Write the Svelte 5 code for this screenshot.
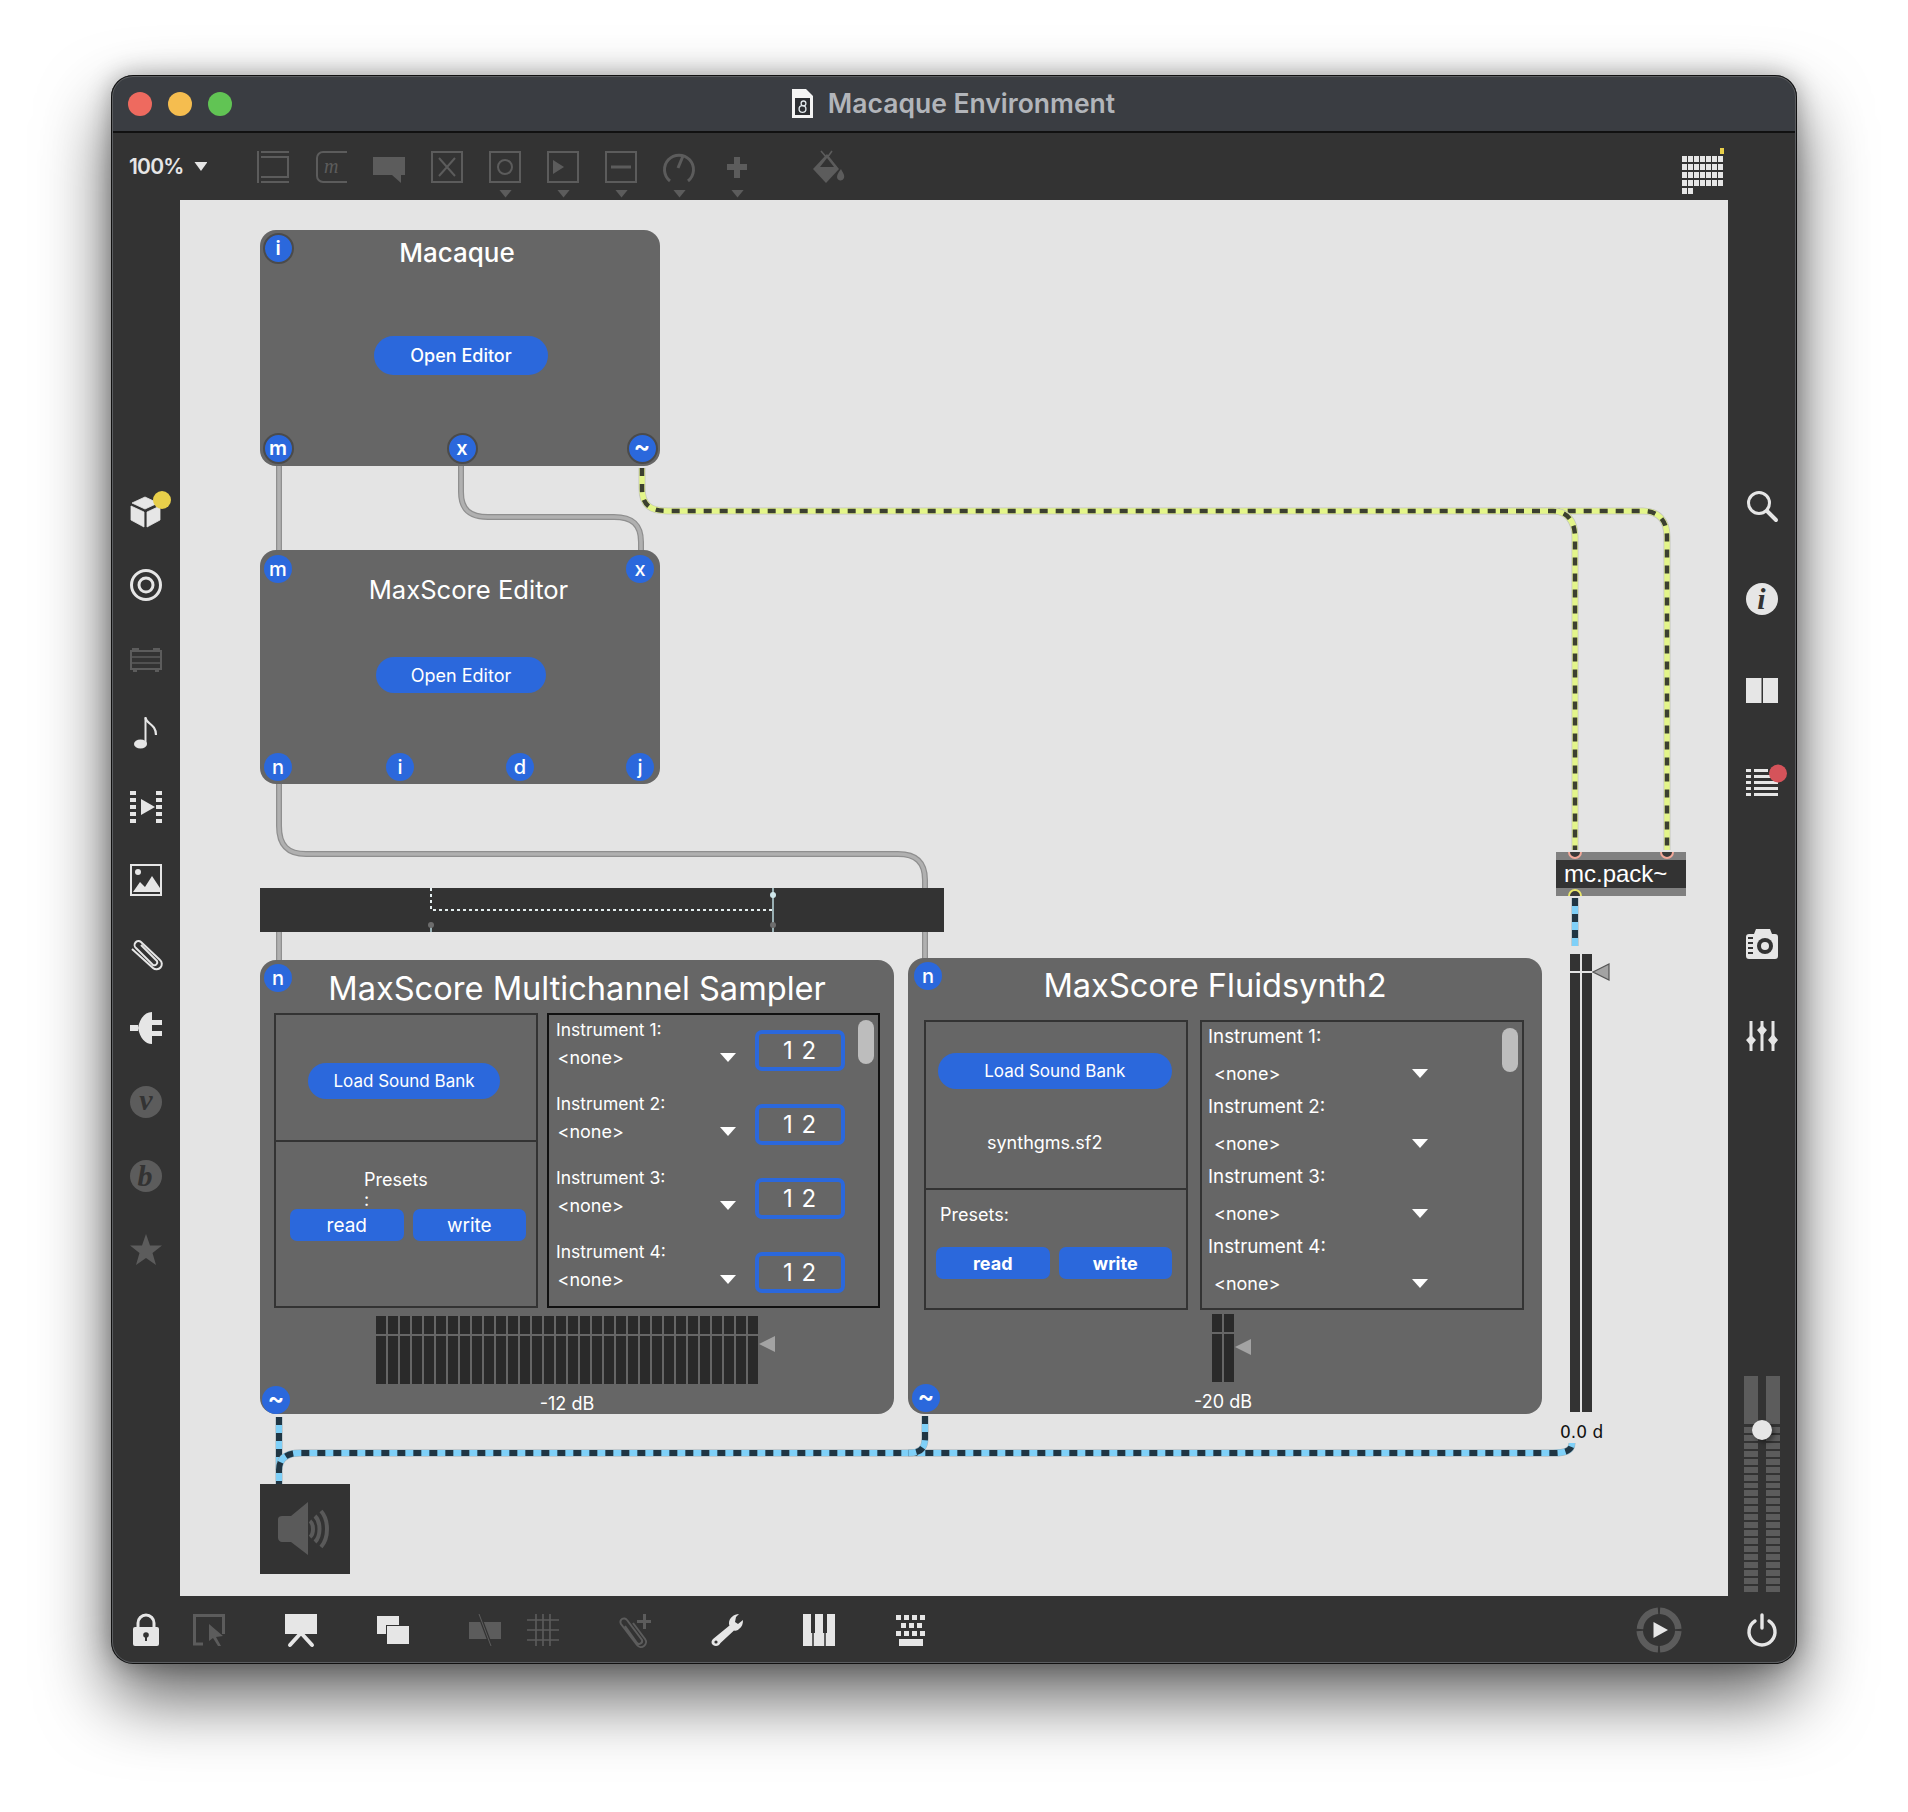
<script>
  const macaquePorts = [
    { t: 'i', x: 18, y: 18, ring: true },
    { t: 'm', x: 18, y: 218, ring: true },
    { t: 'x', x: 202, y: 218, ring: true },
    { t: '~', x: 382, y: 218, ring: true }
  ];
  const editorPorts = [
    { t: 'm', x: 18, y: 19 },
    { t: 'x', x: 380, y: 19 },
    { t: 'n', x: 18, y: 216.5 },
    { t: 'i', x: 140, y: 216.5 },
    { t: 'd', x: 260, y: 216.5 },
    { t: 'j', x: 380, y: 216.5 }
  ];
  const samplerPorts = [
    { t: 'n', x: 18, y: 18 },
    { t: '~', x: 16, y: 440 }
  ];
  const fluidPorts = [
    { t: 'n', x: 20, y: 18 },
    { t: '~', x: 18, y: 440 }
  ];
  const instruments = ['Instrument 1:', 'Instrument 2:', 'Instrument 3:', 'Instrument 4:'];
  const gridRows = [7, 7, 7, 7, 2];
  const cols32 = Array.from({ length: 32 }, (_, i) => i);
  const cols2 = [0, 1];
  const segs = Array.from({ length: 21 }, (_, i) => i);
  const limePaths = [
    'M642 468 V488 C642 505 650 511 668 511 H1643 C1658 511 1667 520 1667 537 V850',
    'M1500 511 H1553 C1566 511 1575 520 1575 537 V850'
  ];
  const bluePaths = [
    'M279 1417 V1484',
    'M279 1470 C279 1458 287 1453 300 1453 H1553 C1565 1453 1572 1451 1572 1443',
    'M925 1416 V1438 C925 1449 920 1453 908 1453',
    'M1575 898 V946'
  ];
  const grayPaths = [
    'M279 466 V550',
    'M461 466 V492 C461 510 470 517 488 517 H614 C632 517 641 524 641 542 V550',
    'M279 784 V826 C279 846 288 854 306 854 H898 C916 854 925 862 925 880 V892',
    'M279 930 V962',
    'M925 930 V960'
  ];
</script>

<div class="page">
  <div class="window">
    <header class="titlebar">
      <div class="lights">
        <span class="light red"></span>
        <span class="light yellow"></span>
        <span class="light green"></span>
      </div>
      <div class="title">
        <svg class="docicon" viewBox="0 0 21 29">
          <path d="M0 0H14L21 7V29H0Z" fill="#f4f4f4" />
          <rect x="3" y="9" width="15" height="17" fill="#2c2e32" />
          <circle cx="10.5" cy="20" r="3.4" fill="none" stroke="#dfe6ea" stroke-width="1.4" />
          <circle cx="11.5" cy="14.4" r="2.4" fill="none" stroke="#dfe6ea" stroke-width="1.3" />
        </svg>
        <span>Macaque Environment</span>
      </div>
    </header>

    <div class="toolbar">
      <div class="zoomctl"><span>100%</span><i class="tri-down"></i></div>
      <div class="tools">
        <svg class="ico dim" viewBox="0 0 32 32"><path d="M1 0V32M4 1H32M4 6H32M4 26H32M4 31H32M31 6V26" fill="none" stroke="currentColor" stroke-width="2" /></svg>
        <svg class="ico dim" viewBox="0 0 32 32"><path d="M32 1H8A6 6 0 0 0 2 7V25A6 6 0 0 0 8 31H32" fill="none" stroke="currentColor" stroke-width="2" /><text x="9" y="22" class="svgm">m</text></svg>
        <svg class="ico dim" viewBox="0 0 32 32"><path d="M0 6H32V24H28V32L19 24H0Z" fill="currentColor" /></svg>
        <svg class="ico dim" viewBox="0 0 32 32"><rect x="1" y="1" width="30" height="30" fill="none" stroke="currentColor" stroke-width="2" /><path d="M8 7L24 25M24 7L8 25" stroke="currentColor" stroke-width="2" /></svg>
        <div class="drop"><svg class="ico dim" viewBox="0 0 32 32"><rect x="1" y="1" width="30" height="30" fill="none" stroke="currentColor" stroke-width="2" /><circle cx="16" cy="16" r="7" fill="none" stroke="currentColor" stroke-width="2" /></svg></div>
        <div class="drop"><svg class="ico dim" viewBox="0 0 32 32"><rect x="1" y="1" width="30" height="30" fill="none" stroke="currentColor" stroke-width="2" /><path d="M6 9L17 16L6 23Z" fill="currentColor" /></svg></div>
        <div class="drop"><svg class="ico dim" viewBox="0 0 32 32"><rect x="1" y="1" width="30" height="30" fill="none" stroke="currentColor" stroke-width="2" /><path d="M6 16H26" stroke="currentColor" stroke-width="3" /></svg></div>
        <div class="drop"><svg class="ico dim" viewBox="0 0 32 32"><path d="M7 30A14.5 14.5 0 1 1 25 30" fill="none" stroke="currentColor" stroke-width="3" /><path d="M15 17L20 5" stroke="currentColor" stroke-width="3" /></svg></div>
        <div class="drop"><svg class="ico dim" viewBox="0 0 32 32"><path d="M13 6H19V13H26V19H19V27H13V19H6V13H13Z" fill="currentColor" /></svg></div>
        <svg class="ico dim paint" viewBox="0 0 32 32"><path d="M15 3L27 18L14 32L1 18Z" fill="currentColor" /><path d="M9 0L15 7M20 0L15 7" stroke="currentColor" stroke-width="1.6" fill="none" /><path d="M29 18C31 22 33 24 32 27A3.6 3.6 0 0 1 25 26C25 23 27 21 29 18Z" fill="currentColor" /><path d="M8 16L15 7L22 16Z" fill="#333" /></svg>
      </div>
      <div class="gridmenu">
        <div class="gridtop"><b></b></div>
        {#each gridRows as n}
          <div class="gridrow">
            {#each Array(n) as _}<b></b>{/each}
          </div>
        {/each}
      </div>
    </div>

    <div class="middle">
      <aside class="side left">
        <svg class="ico" viewBox="0 0 32 32"><path d="M2 8L15 2L28 8L15 14ZM1 11L14 17V32L1 25ZM17 17L30 11V25L17 32Z" fill="currentColor" stroke="currentColor" stroke-linejoin="round" stroke-width=".8" /><circle cx="32" cy="5" r="9" fill="#e8cf4a" /></svg>
        <svg class="ico" viewBox="0 0 32 32"><circle cx="16" cy="16" r="14.5" fill="none" stroke="currentColor" stroke-width="3" /><circle cx="16" cy="16" r="7" fill="none" stroke="currentColor" stroke-width="3" /></svg>
        <svg class="ico dim" viewBox="0 0 32 32"><rect x="1" y="8" width="30" height="18" fill="none" stroke="currentColor" stroke-width="2" /><path d="M1 14H31M1 20H31" stroke="currentColor" stroke-width="1.5" /><path d="M2 8V5H9V8M23 8V5H30V8M3 26V29H7V26M25 26V29H29V26" fill="currentColor" /></svg>
        <svg class="ico" viewBox="0 0 32 32"><ellipse cx="10.5" cy="27" rx="6.5" ry="4.6" fill="currentColor" /><path d="M15.5 27V0" stroke="currentColor" stroke-width="2" /><path d="M15.5 1C16.5 7 26 7 26 18" fill="none" stroke="currentColor" stroke-width="2.2" /></svg>
        <svg class="ico" viewBox="0 0 32 32"><path d="M0 0H6V4H0ZM0 7H6V11H0ZM0 14H6V18H0ZM0 21H6V25H0ZM0 28H6V32H0ZM26 0H32V4H26ZM26 7H32V11H26ZM26 14H32V18H26ZM26 21H32V25H26ZM26 28H32V32H26ZM11 8L25 16L11 24Z" fill="currentColor" /></svg>
        <svg class="ico" viewBox="0 0 32 32"><rect x="1" y="1" width="30" height="30" fill="none" stroke="currentColor" stroke-width="2" /><circle cx="8" cy="8" r="3" fill="currentColor" /><path d="M3 28L10 18L15 23L22 12L30 24V28Z" fill="currentColor" /></svg>
        <svg class="ico" viewBox="0 0 32 32"><path d="M11 8L27 24A3 3 0 0 1 23 28L6 11A3.6 3.6 0 0 1 11 5L30 23A5 5 0 0 1 23 31L2 12" transform="translate(0 -1)" fill="none" stroke="currentColor" stroke-width="2" /></svg>
        <svg class="ico" viewBox="0 0 32 32"><path d="M0 13H8V19H0ZM8 16C10 6 15 0 22 0V32C15 32 10 26 8 16ZM22 8H32V13H22ZM22 19H32V24H22Z" fill="currentColor" /></svg>
        <svg class="ico dim" viewBox="0 0 32 32"><circle cx="16" cy="16" r="16" fill="currentColor" /><text x="16" y="24" class="svgdark">v</text></svg>
        <svg class="ico dim" viewBox="0 0 32 32"><circle cx="16" cy="16" r="16" fill="currentColor" /><text x="15" y="26" class="svgdark">b</text></svg>
        <svg class="ico dim" viewBox="0 0 32 32"><path d="M16 0L20 11.5H32L22.5 19L26 31L16 24L6 31L9.5 19L0 11.5H12Z" fill="currentColor" /></svg>
      </aside>

      <main class="canvas">
        <svg class="wires" viewBox="180 200 1548 1396">
          {#each grayPaths as d}
            <path {d} class="w-gray-o" />
            <path {d} class="w-gray" />
          {/each}
          {#each limePaths as d}
            <path {d} class="w-lime-o" />
            <path {d} class="w-lime" />
            <path {d} class="w-lime-d" />
          {/each}
          {#each bluePaths as d}
            <path {d} class="w-blue-o" />
            <path {d} class="w-blue" />
            <path {d} class="w-blue-d" />
          {/each}
        </svg>

        <section class="box macaque">
          <h2 class="mtitle">Macaque</h2>
          <button class="pill mbtn">Open Editor</button>
          {#each macaquePorts as p}
            <span class="port" class:ring={p.ring} class:tilde={p.t === '~'} style:left="{p.x}px" style:top="{p.y}px">{p.t}</span>
          {/each}
        </section>

        <section class="box editor">
          <h2 class="etitle">MaxScore Editor</h2>
          <button class="pill ebtn">Open Editor</button>
          {#each editorPorts as p}
            <span class="port" style:left="{p.x}px" style:top="{p.y}px">{p.t}</span>
          {/each}
        </section>

        <div class="bar">
          <svg class="barlines" viewBox="0 0 684 44">
            <path d="M171 0V22H513" class="dots" />
            <path d="M513 0V44M171 36V44" class="thin" />
            <circle cx="171" cy="37" r="3" fill="#6d6d6d" />
            <circle cx="513" cy="7" r="3" fill="#cfe6ea" />
            <circle cx="513" cy="37" r="3" fill="#6d6d6d" />
          </svg>
        </div>

        <section class="box sampler">
          <h2 class="btitle">MaxScore Multichannel Sampler</h2>
          <div class="panels s-panels">
            <div class="lpanel">
              <div class="s-top"><button class="pill s-load">Load Sound Bank</button></div>
              <div class="s-bottom">
                <div class="s-preset">Presets<br />:</div>
                <div class="rw s-rw"><button class="rect">read</button><button class="rect">write</button></div>
              </div>
            </div>
            <div class="rpanel s-list">
              {#each instruments as ins}
                <div class="s-row">
                  <div class="s-col">
                    <div class="lab">{ins}</div>
                    <div class="none s-none"><span>&lt;none&gt;</span><i class="tri-menu"></i></div>
                  </div>
                  <div class="numbox">1 2</div>
                </div>
              {/each}
              <span class="thumb s-thumb"></span>
            </div>
          </div>
          <div class="meterwrap s-meter">
            <div class="meter m32">
              {#each cols32 as c}<b class="c1"></b>{/each}
              {#each cols32 as c}<b class="c2"></b>{/each}
            </div>
            <i class="gain"></i>
            <div class="db">-12 dB</div>
          </div>
          {#each samplerPorts as p}
            <span class="port" class:tilde={p.t === '~'} style:left="{p.x}px" style:top="{p.y}px">{p.t}</span>
          {/each}
        </section>

        <section class="box fluid">
          <h2 class="btitle ftitle">MaxScore Fluidsynth2</h2>
          <div class="panels f-panels">
            <div class="lpanel">
              <div class="f-top">
                <button class="pill f-load">Load Sound Bank</button>
                <div class="sf">synthgms.sf2</div>
              </div>
              <div class="f-bottom">
                <div class="f-preset">Presets:</div>
                <div class="rw f-rw"><button class="rect bold">read</button><button class="rect bold">write</button></div>
              </div>
            </div>
            <div class="rpanel f-list">
              {#each instruments as ins}
                <div class="f-row">
                  <div class="lab f-lab">{ins}</div>
                  <div class="none f-none"><span>&lt;none&gt;</span><i class="tri-menu"></i></div>
                </div>
              {/each}
              <span class="thumb f-thumb"></span>
            </div>
          </div>
          <div class="meterwrap f-meter">
            <div class="meter m2">
              {#each cols2 as c}<b class="c1"></b>{/each}
              {#each cols2 as c}<b class="c2"></b>{/each}
            </div>
            <i class="gain"></i>
            <div class="db">-20 dB</div>
          </div>
          {#each fluidPorts as p}
            <span class="port" class:tilde={p.t === '~'} style:left="{p.x}px" style:top="{p.y}px">{p.t}</span>
          {/each}
        </section>

        <div class="mcpack">
          <span>mc.pack~</span>
          <svg class="nubs" viewBox="0 0 130 44">
            <circle cx="19" cy="0" r="6" class="inlet" />
            <circle cx="111" cy="0" r="6" class="inlet" />
            <circle cx="19" cy="44" r="6" class="outlet" />
          </svg>
        </div>

        <div class="bigmeter">
          <div class="meter mbig"><b></b><b></b><b></b><b></b></div>
          <svg class="bigtri" viewBox="0 0 18 20"><path d="M1 10L17 2V18Z" fill="#a3a3a3" stroke="#555" stroke-width="1.2" /></svg>
          <div class="bigdb">0.0 d</div>
        </div>

        <div class="speaker">
          <svg viewBox="0 0 90 90">
            <path d="M18 35C18 33 20 32 22 32H31L48 18V71L31 58H22C20 58 18 56 18 54Z" fill="#5a5a5a" />
            <path d="M50 37C54 40 54 50 50 53M55 32C61 38 61 52 55 58M61 27C69 36 69 54 61 63" fill="none" stroke="#5a5a5a" stroke-width="4" />
          </svg>
        </div>
      </main>

      <aside class="side right">
        <svg class="ico" viewBox="0 0 32 32"><circle cx="13" cy="13" r="10.5" fill="none" stroke="currentColor" stroke-width="3" /><path d="M21 21L30 30" stroke="currentColor" stroke-width="4" stroke-linecap="round" /></svg>
        <svg class="ico infoi" viewBox="0 0 32 32"><circle cx="16" cy="16" r="16" fill="currentColor" /><text x="15.5" y="26" class="svgi">i</text></svg>
        <svg class="ico" viewBox="0 0 32 32"><path d="M0 4H15.5V29H0ZM17 4H32V29H17Z" fill="currentColor" /></svg>
        <svg class="ico listi" viewBox="0 0 32 32"><path d="M0 5H5V8H0ZM8 5H22V8H8ZM0 11H5V14H0ZM8 11H26V14H8ZM0 17H5V20H0ZM8 17H32V20H8ZM0 23H5V26H0ZM8 23H32V26H8ZM0 29H5V32H0ZM8 29H32V32H8Z" fill="currentColor" /><circle cx="32" cy="9.5" r="9" fill="#d5535a" /></svg>
        <div class="spacer-right"></div>
        <svg class="ico" viewBox="0 0 32 32"><path d="M3 6H8L10 1H24L26 6H29A3 3 0 0 1 32 9V28A3 3 0 0 1 29 31H3A3 3 0 0 1 0 28V9A3 3 0 0 1 3 6Z" fill="currentColor" /><circle cx="19" cy="18" r="8" fill="#333" /><circle cx="19" cy="18" r="4" fill="currentColor" /><path d="M2 10H7M2 15H7M2 20H7M2 25H7" stroke="#333" stroke-width="2" /></svg>
        <svg class="ico" viewBox="0 0 32 32"><path d="M5 1V31M16 1V31M27 1V31" stroke="currentColor" stroke-width="3" /><path d="M5 15L10 20L5 26L0 20ZM16 5L21 10L16 16L11 10ZM27 14L32 20L27 26L22 20Z" fill="currentColor" /></svg>
        <div class="volume">
          <div class="volcol">
            <div class="volhead"></div>
            {#each segs as s}<b></b>{/each}
          </div>
          <div class="volcol">
            <div class="volhead"></div>
            {#each segs as s}<b></b>{/each}
          </div>
          <span class="knob"></span>
        </div>
      </aside>
    </div>

    <footer class="bottombar">
      <svg class="ico" viewBox="0 0 32 32"><path d="M8 14V9A8 8 0 0 1 24 9V14" fill="none" stroke="currentColor" stroke-width="3" /><rect x="3" y="13" width="26" height="19" rx="2" fill="currentColor" /><circle cx="16" cy="21" r="2.8" fill="#333" /><rect x="15" y="21" width="2" height="6" fill="#333" /></svg>
      <svg class="ico dim g1" viewBox="0 0 32 32"><path d="M10 30H1.5V1.5H30.5V20" fill="none" stroke="currentColor" stroke-width="3" /><path d="M16 10L30 22L23 23L28 32L25 32L20 24L16 27Z" fill="currentColor" /></svg>
      <svg class="ico g2" viewBox="0 0 32 32"><rect width="32" height="20" fill="currentColor" /><path d="M15 20L5 31M17 20L27 31" stroke="currentColor" stroke-width="4" stroke-linecap="round" fill="none" /></svg>
      <svg class="ico g2" viewBox="0 0 32 32"><rect x="0" y="2" width="22" height="18" fill="currentColor" /><rect x="9" y="11" width="24" height="20" fill="#333" /><rect x="10" y="12" width="22" height="18" fill="currentColor" /></svg>
      <svg class="ico dim g2" viewBox="0 0 32 32"><rect y="8" width="32" height="17" fill="currentColor" /><path d="M10 0L22 32" stroke="#333" stroke-width="3.5" /><path d="M10 0L22 32" stroke="currentColor" stroke-width="1" /></svg>
      <svg class="ico dim g3" viewBox="0 0 32 32"><path d="M9 0V32M16 0V32M23 0V32M0 6H32M0 16H32M0 26H32" stroke="currentColor" stroke-width="1.6" /></svg>
      <svg class="ico dim g2" viewBox="0 0 32 32"><path d="M8 11L20 28A3 3 0 0 0 25 25L10 5A3.5 3.5 0 0 0 4 9L20 30A5 5 0 0 0 28 24L16 8" transform="translate(-2 1)" fill="none" stroke="currentColor" stroke-width="2" /><path d="M24 0H27V6H32V9H27V15H24V9H18V6H24Z" fill="currentColor" /></svg>
      <svg class="ico g2" viewBox="0 0 32 32"><path d="M28 0C23 0 18 4 18 9C18 9.5 18 10.5 18.5 11.5L2 25C-1 28 1 32 5 32C7 32 8.5 31 9.5 29L23 16.5C25 17 26.5 16.5 28 15C31 13 32 10 32 6L27 10L24 8L25 3Z" fill="currentColor" /><circle cx="5" cy="28" r="1.6" fill="#333" /></svg>
      <svg class="ico g2" viewBox="0 0 32 32"><rect width="32" height="32" fill="currentColor" /><path d="M8 0H12V19H8ZM20 0H24V19H20Z" fill="#333" /><path d="M10 19V32M22 19V32" stroke="#333" stroke-width="1.5" /></svg>
      <svg class="ico g2" viewBox="0 0 32 32"><path d="M1 1H6V6H1ZM9 1H14V6H9ZM17 1H22V6H17ZM25 1H30V6H25ZM6 9H11V14H6ZM14 9H19V14H14ZM22 9H27V14H22ZM1 17H6V22H1ZM9 17H14V22H9ZM17 17H22V22H17ZM25 17H30V22H25ZM4 25H28V32H4Z" fill="currentColor" /></svg>
      <div class="grow"></div>
      <svg class="transport" viewBox="0 0 46 46">
        <g fill="none" stroke="#5c5c5c" stroke-width="6.5">
          <path d="M4 22A19.5 19.5 0 0 1 22 3.7" />
          <path d="M24 3.7A19.5 19.5 0 0 1 42.3 22" />
          <path d="M42.3 24A19.5 19.5 0 0 1 24 42.3" />
          <path d="M22 42.3A19.5 19.5 0 0 1 3.7 24" />
        </g>
        <path d="M17.5 15L32 23L17.5 31Z" fill="#e6e6e6" />
      </svg>
      <svg class="ico power" viewBox="0 0 32 32"><path d="M9 7A13 13 0 1 0 23 7" fill="none" stroke="currentColor" stroke-width="3.4" stroke-linecap="round" /><path d="M16 1V14" stroke="currentColor" stroke-width="3.4" stroke-linecap="round" /></svg>
    </footer>
  </div>
</div>

<style>
  :global(body) { margin: 0; background: #fff; }
  * { box-sizing: border-box; }
  .page {
    width: 1908px; height: 1812px; padding: 75px 0 0 111px;
    font-family: Inter, "Noto Sans", sans-serif; background: #fff; overflow: hidden;
  }
  .window {
    position: relative; width: 1686px; height: 1589px; border-radius: 22px; background: #333;
    display: flex; flex-direction: column; overflow: hidden;
    box-shadow: 0 34px 70px rgba(0,0,0,.62), 0 0 24px rgba(0,0,0,.3);
  }
  .window::after {
    content: ''; position: absolute; inset: 0; border-radius: 22px; pointer-events: none;
    box-shadow: inset 0 0 0 1px #111, inset 0 0 0 2px #5b5d60;
  }

  .titlebar {
    position: relative; flex: 0 0 58px; background: #3a3d42; border-bottom: 2px solid #111;
    display: flex; align-items: center; justify-content: center;
  }
  .lights { position: absolute; left: 17px; top: 17px; display: flex; gap: 16px; }
  .light { width: 24px; height: 24px; border-radius: 50%; }
  .red { background: #ee6a5f; } .yellow { background: #f5bd4f; } .green { background: #61c454; }
  .title { display: flex; align-items: center; gap: 15px; color: #b2b5ba; font-size: 26.5px; font-weight: 600; margin-left: -1px; }
  .docicon { width: 21px; height: 29px; }

  .toolbar { position: relative; flex: 0 0 67px; display: flex; align-items: center; padding-left: 18px; }
  .zoomctl { display: flex; align-items: center; color: #e6e6e6; font-size: 21px; font-weight: 600; letter-spacing: -.8px; width: 128px; gap: 11px; }
  .tri-down { width: 13px; height: 9px; background: #e6e6e6; clip-path: polygon(0 0, 100% 0, 50% 100%); }
  .tools { display: flex; gap: 26px; }
  .ico { width: 32px; height: 32px; color: #e6e6e6; overflow: visible; flex: none; display: block; }
  .ico.dim { color: #5c5c5c; }
  .paint { margin-left: 33px; }
  .drop { position: relative; width: 32px; height: 32px; }
  .drop::after {
    content: ''; position: absolute; left: 10px; top: 39px; width: 13px; height: 8px;
    background: #5c5c5c; clip-path: polygon(0 0, 100% 0, 50% 100%);
  }
  .svgm { font: italic 20px "Liberation Serif", serif; fill: currentColor; }
  .svgdark { font: italic bold 30px "Liberation Serif", serif; fill: #333; text-anchor: middle; }
  .svgi { font: italic bold 30px "Liberation Serif", serif; fill: #333; text-anchor: middle; }

  .gridmenu { position: absolute; left: 1571px; top: 15px; display: flex; flex-direction: column; gap: 2px; width: 42px; }
  .gridrow { display: flex; gap: 1.5px; height: 6px; }
  .gridrow b { width: 4.5px; background: #e6e6e6; }
  .gridtop { display: flex; justify-content: flex-end; height: 6px; }
  .gridtop b { width: 4.5px; background: #e8cf4a; }

  .middle { flex: 1; display: flex; min-height: 0; }
  .side { flex: 0 0 69px; display: flex; flex-direction: column; align-items: center; }
  .side.left { padding-top: 295px; gap: 41.9px; }
  .side.right { padding: 290px 1px 0 0; gap: 60px; position: relative; }
  .infoi { position: relative; top: 1px; }
  .listi { position: relative; top: -2px; }
  .spacer-right { height: 70px; margin-bottom: -60px; }
  .canvas { position: relative; width: 1548px; height: 1396px; background: #e4e4e4; }
  .wires { position: absolute; inset: 0; width: 1548px; height: 1396px; }
  .wires path { fill: none; }
  .w-gray-o { stroke: #8f8f8f; stroke-width: 6; }
  .w-gray { stroke: #b0b0b0; stroke-width: 3.5; }
  .w-lime-o { stroke: #c4c6bc; stroke-width: 7; }
  .w-lime { stroke: #e3f58a; stroke-width: 5.5; }
  .w-lime-d { stroke: #3c4030; stroke-width: 4.5; stroke-dasharray: 8 8; }
  .w-blue-o { stroke: #9fb0b8; stroke-width: 7; }
  .w-blue { stroke: #7fd0f8; stroke-width: 6; }
  .w-blue-d { stroke: #203644; stroke-width: 6; stroke-dasharray: 8 8; }

  .box { position: absolute; background: #666; border-radius: 16px; color: #fff; }
  .macaque { left: 80px; top: 30px; width: 400px; height: 236px; display: flex; flex-direction: column; align-items: center; }
  .editor { left: 80px; top: 350px; width: 400px; height: 234px; display: flex; flex-direction: column; align-items: center; }
  .sampler { left: 80px; top: 760px; width: 634px; height: 454px; }
  .fluid { left: 728px; top: 758px; width: 634px; height: 456px; }
  h2 { margin: 0; font-weight: 400; }
  button { border: 0; padding: 0; color: #fff; font-family: inherit; background: #2b68dc; }
  .pill { border-radius: 20px; font-size: 17px; }
  .mtitle { font-size: 26px; font-weight: 500; height: 44px; line-height: 46px; margin-right: 6px; }
  .mbtn { width: 174px; height: 39px; margin-top: 62px; margin-left: 2px; font-weight: 500; font-size: 18px; }
  .etitle { font-size: 25.6px; height: 76px; line-height: 79px; margin-left: 17px; }
  .ebtn { width: 170px; height: 36px; margin-top: 31px; margin-left: 2px; font-size: 18px; }
  .rect { width: 113.5px; height: 32px; border-radius: 7px; font-size: 19px; }
  .rect.bold { font-weight: 700; font-size: 18px; }

  .port {
    position: absolute; width: 28px; height: 28px; margin: -14px 0 0 -14px; border-radius: 50%;
    background: #2b68dc; color: #fff; font-size: 20px; font-weight: 500;
    display: flex; align-items: center; justify-content: center; line-height: 1;
  }
  .port.ring { width: 31px; height: 31px; margin: -15.5px 0 0 -15.5px; border: 2px solid #4b4b4b; font-weight: 600; }
  .port.tilde { font-size: 25px; font-weight: 600; padding-bottom: 3px; }

  .bar { position: absolute; left: 80px; top: 688px; width: 684px; height: 44px; background: #333; }
  .barlines { width: 684px; height: 44px; display: block; }
  .dots { fill: none; stroke: #e4eeef; stroke-width: 2; stroke-dasharray: 3 3; }
  .thin { fill: none; stroke: #bcd9de; stroke-width: 1.5; }

  .btitle { font-size: 32.6px; height: 53px; line-height: 56px; text-align: center; }
  .ftitle { height: 62px; line-height: 54px; padding-right: 20px; }
  .panels { display: flex; }
  .s-panels { margin-left: 14px; height: 295px; gap: 9px; }
  .f-panels { margin-left: 16px; height: 290px; gap: 12px; }
  .lpanel { width: 264px; border: 2px solid #333; display: flex; flex-direction: column; }
  .rpanel { position: relative; border: 2px solid #111; }
  .s-list { width: 333px; padding-left: 7px; }
  .f-list { width: 323.5px; border-color: #333; padding-left: 6px; }
  .s-top { height: 127px; display: flex; justify-content: center; align-items: flex-start; padding-top: 48px; padding-right: 4px; border-bottom: 2px solid #333; flex: none; }
  .s-load { width: 192px; height: 36px; }
  .s-preset { font-size: 18px; line-height: 20px; margin: 27.5px 0 0 88px; }
  .rw { display: flex; gap: 9px; }
  .s-rw { margin: -.5px 0 0 14px; position: relative; }
  .s-row { height: 74px; display: flex; }
  .s-col { width: 199px; padding-top: .5px; }
  .lab { font-size: 17.5px; height: 28px; line-height: 28px; }
  .none { font-size: 18px; display: flex; align-items: center; justify-content: space-between; }
  .s-none { height: 28px; margin-left: 1.5px; width: 178.5px; }
  .tri-menu { width: 16px; height: 9px; background: #fff; clip-path: polygon(0 0, 100% 0, 50% 100%); }
  .numbox {
    width: 90px; height: 41px; margin-top: 15px; border: 4px solid #2b68dc; border-radius: 7px;
    display: flex; align-items: center; justify-content: center; font-size: 24px; letter-spacing: 1px;
  }
  .thumb { position: absolute; width: 16px; height: 44px; border-radius: 8px; background: #bdbdbd; }
  .s-thumb { left: 309px; top: 5px; }
  .f-thumb { left: 299.5px; top: 6px; }

  .meterwrap { position: relative; }
  .s-meter { margin: 8px 0 0 116px; width: 382px; }
  .f-meter { margin: 4px 0 0 304px; width: 22px; }
  .meter { display: grid; gap: 2px; grid-template-rows: 18px 48px; }
  .meter b { background: #2a2a2a; }
  .m32 { grid-template-columns: repeat(32, 10px); }
  .m2 { grid-template-columns: repeat(2, 10px); }
  .gain { position: absolute; top: 20px; left: 383px; width: 16px; height: 16px; background: #a3a3a3; clip-path: polygon(0 50%, 100% 0, 100% 100%); }
  .f-meter .gain { left: 23px; top: 25px; }
  .db { display: flex; justify-content: center; white-space: nowrap; font-size: 18px; line-height: 24px; margin-top: 8px; }

  .f-top { height: 168px; padding: 31px 0 0 12px; border-bottom: 2px solid #333; flex: none; }
  .f-load { width: 233.5px; height: 36px; display: block; }
  .sf { font-size: 18px; margin: 42px 0 0 49px; line-height: 24px; }
  .f-preset { font-size: 18px; line-height: 24px; margin: 13px 0 0 14px; }
  .f-rw { margin: 20px 0 0 10px; }
  .f-row { height: 70px; }
  .f-lab { height: 31px; line-height: 30px; font-size: 18.8px; }
  .f-none { height: 39px; margin: 1px 0 0 6px; width: 214px; }

  .mcpack {
    position: absolute; left: 1376px; top: 652px; width: 130px; height: 44px; background: #808080; overflow: hidden;
    color: #fff; font: 24px/28px "Liberation Sans", sans-serif;
  }
  .mcpack span { display: block; margin-top: 8px; height: 28px; padding-left: 8px; background: #333; }
  .nubs { position: absolute; left: 0; top: 0; width: 130px; height: 44px; }
  .inlet { fill: #3a3a3a; stroke: #f2a899; stroke-width: 2; }
  .outlet { fill: #3a3a3a; stroke: #e9e66a; stroke-width: 2; }

  .bigmeter { position: absolute; left: 1390px; top: 754px; width: 22px; }
  .mbig { grid-template-columns: 10px 10px; grid-template-rows: 17px 439px; }
  .mbig b { background: #333; }
  .bigtri { position: absolute; left: 22px; top: 8px; width: 18px; height: 20px; }
  .bigdb { position: absolute; top: 465px; left: -10px; font: 17px/26px "DejaVu Sans", sans-serif; color: #111; white-space: nowrap; }

  .speaker { position: absolute; left: 80px; top: 1284px; width: 90px; height: 90px; background: #333; }
  .speaker svg { width: 90px; height: 90px; display: block; }

  .volume { position: absolute; left: 16px; top: 1176px; width: 36px; height: 216px; display: flex; justify-content: space-between; }
  .volcol { width: 14px; display: flex; flex-direction: column; gap: 2px; }
  .volhead { height: 48px; background: #5c5c5c; margin-bottom: 1px; }
  .volcol b { height: 6px; background: #5c5c5c; }
  .knob { position: absolute; left: 8px; top: 44px; width: 20px; height: 20px; border-radius: 50%; background: #e6e6e6; box-shadow: 3px 3px 4px rgba(0,0,0,.35); }

  .bottombar { flex: 0 0 68px; display: flex; align-items: center; padding: 0 19px; }
  .g1 { margin-left: 31px; }
  .g2 { margin-left: 60px; }
  .g3 { margin-left: 26px; }
  .grow { flex: 1; }
  .transport { width: 46px; height: 46px; flex: none; position: relative; left: 1px; }
  .power { margin-left: 65px; }
</style>
